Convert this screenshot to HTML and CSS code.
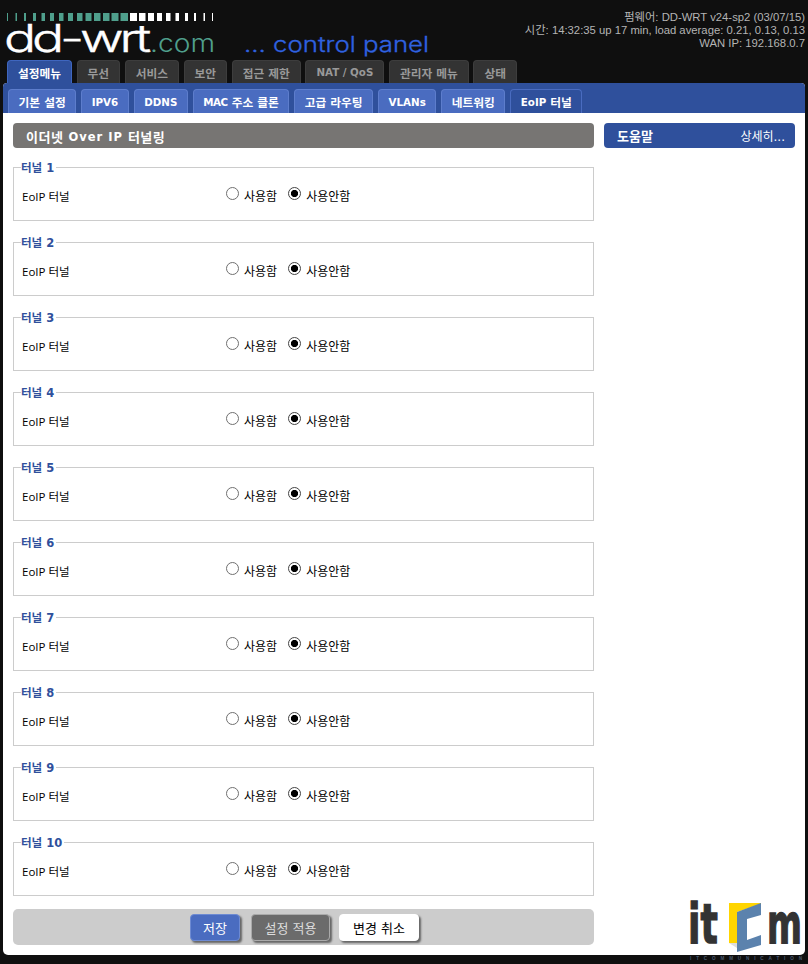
FILE: index.html
```html
<!DOCTYPE html>
<html lang="ko">
<head>
<meta charset="utf-8">
<title>DD-WRT EoIP</title>
<link rel="stylesheet" href="styles.css">
</head>
<body>
<div class="page">
  <header class="header">
    <svg class="logo" width="440" height="60" viewBox="0 0 440 60">
      <g class="tick-green">
        <rect x="7" y="13" width="1" height="8"/><rect x="15.5" y="13" width="1.5" height="8"/><rect x="24" y="13" width="2" height="8"/><rect x="33" y="13" width="3" height="8"/><rect x="41.5" y="13" width="3.5" height="8"/><rect x="50" y="13" width="4" height="8"/><rect x="59" y="13" width="4.5" height="8"/><rect x="68" y="13" width="5" height="8"/><rect x="77" y="13" width="5.5" height="8"/><rect x="85.5" y="13" width="6" height="8"/><rect x="94" y="13" width="6.5" height="8"/><rect x="103" y="13" width="6.5" height="8"/><rect x="111.5" y="13" width="7" height="8"/><rect x="120.5" y="13" width="7.5" height="8"/>
      </g>
      <g class="tick-white">
        <rect x="130" y="13" width="7" height="8"/><rect x="139" y="13" width="6.5" height="8"/><rect x="148" y="13" width="6" height="8"/><rect x="157" y="13" width="5" height="8"/><rect x="166" y="13" width="4.5" height="8"/><rect x="175.5" y="13" width="3.5" height="8"/><rect x="185" y="13" width="3" height="8"/><rect x="194" y="13" width="2" height="8"/><rect x="203.5" y="13" width="1.5" height="8"/><rect x="212" y="13" width="1" height="8"/>
      </g>
      <text class="logo-dd" x="4" y="52" textLength="143" lengthAdjust="spacingAndGlyphs">dd-wrt</text>
      <text class="logo-com" x="150" y="52" textLength="65" lengthAdjust="spacingAndGlyphs">.com</text>
      <text class="logo-panel" x="244" y="52" textLength="185" lengthAdjust="spacingAndGlyphs">... control panel</text>
    </svg>
    <div class="info">
      <div>펌웨어: DD-WRT v24-sp2 (03/07/15)</div>
      <div>시간: 14:32:35 up 17 min, load average: 0.21, 0.13, 0.13</div>
      <div>WAN IP: 192.168.0.7</div>
    </div>
  </header>

  <nav class="tabs">
    <a class="tab tab-active">설정메뉴</a>
    <a class="tab">무선</a>
    <a class="tab">서비스</a>
    <a class="tab">보안</a>
    <a class="tab">접근 제한</a>
    <a class="tab"><span class="lat">NAT / QoS</span></a>
    <a class="tab">관리자 메뉴</a>
    <a class="tab">상태</a>
  </nav>

  <div class="panel">
    <nav class="subtabs">
      <a class="subtab">기본 설정</a>
      <a class="subtab"><span class="lat">IPV6</span></a>
      <a class="subtab"><span class="lat">DDNS</span></a>
      <a class="subtab"><span class="lat lat-tight">MAC</span>&nbsp;주소 클론</a>
      <a class="subtab">고급 라우팅</a>
      <a class="subtab"><span class="lat">VLANs</span></a>
      <a class="subtab">네트워킹</a>
      <a class="subtab subtab-active"><span class="lat">EoIP</span>&nbsp;터널</a>
    </nav>
    <div class="content">
      <main class="main">
        <h2 class="title">이더넷&nbsp;<span class="title-lat">Over IP</span>&nbsp;터널링</h2>

        <fieldset class="group"><legend>터널 1</legend><div class="row"><span class="row-label">EoIP 터널</span><label class="opt"><input type="radio" name="t1">사용함</label><label class="opt"><input type="radio" name="t1" checked>사용안함</label></div></fieldset>
        <fieldset class="group"><legend>터널 2</legend><div class="row"><span class="row-label">EoIP 터널</span><label class="opt"><input type="radio" name="t2">사용함</label><label class="opt"><input type="radio" name="t2" checked>사용안함</label></div></fieldset>
        <fieldset class="group"><legend>터널 3</legend><div class="row"><span class="row-label">EoIP 터널</span><label class="opt"><input type="radio" name="t3">사용함</label><label class="opt"><input type="radio" name="t3" checked>사용안함</label></div></fieldset>
        <fieldset class="group"><legend>터널 4</legend><div class="row"><span class="row-label">EoIP 터널</span><label class="opt"><input type="radio" name="t4">사용함</label><label class="opt"><input type="radio" name="t4" checked>사용안함</label></div></fieldset>
        <fieldset class="group"><legend>터널 5</legend><div class="row"><span class="row-label">EoIP 터널</span><label class="opt"><input type="radio" name="t5">사용함</label><label class="opt"><input type="radio" name="t5" checked>사용안함</label></div></fieldset>
        <fieldset class="group"><legend>터널 6</legend><div class="row"><span class="row-label">EoIP 터널</span><label class="opt"><input type="radio" name="t6">사용함</label><label class="opt"><input type="radio" name="t6" checked>사용안함</label></div></fieldset>
        <fieldset class="group"><legend>터널 7</legend><div class="row"><span class="row-label">EoIP 터널</span><label class="opt"><input type="radio" name="t7">사용함</label><label class="opt"><input type="radio" name="t7" checked>사용안함</label></div></fieldset>
        <fieldset class="group"><legend>터널 8</legend><div class="row"><span class="row-label">EoIP 터널</span><label class="opt"><input type="radio" name="t8">사용함</label><label class="opt"><input type="radio" name="t8" checked>사용안함</label></div></fieldset>
        <fieldset class="group"><legend>터널 9</legend><div class="row"><span class="row-label">EoIP 터널</span><label class="opt"><input type="radio" name="t9">사용함</label><label class="opt"><input type="radio" name="t9" checked>사용안함</label></div></fieldset>
        <fieldset class="group"><legend>터널 10</legend><div class="row"><span class="row-label">EoIP 터널</span><label class="opt"><input type="radio" name="t10">사용함</label><label class="opt"><input type="radio" name="t10" checked>사용안함</label></div></fieldset>

        <div class="actions">
          <button class="btn btn-save">저장</button>
          <button class="btn btn-apply">설정 적용</button>
          <button class="btn btn-cancel">변경 취소</button>
        </div>
      </main>
      <aside class="side">
        <div class="help">
          <span class="help-title">도움말</span>
          <a class="help-more">상세히...</a>
        </div>
      </aside>
    </div>
    <svg class="itcom" width="118" height="64" viewBox="0 0 118 64">
      <text class="itcom-letter" transform="translate(0 44.5) scale(.66 1)">it</text>
      <polygon class="itcom-shadow" points="41,45 49,45 49,50"/>
      <polygon class="itcom-yellow" points="41,5 73,5 73,6 49,14 49,45 41,45"/>
      <polygon class="itcom-blue" points="49,14 73,5 73,17 59,21 59,42 73,37 73,47 49,54"/>
      <text class="itcom-letter" transform="translate(79 44.5) scale(.61 1)">m</text>
      <text class="itcom-small" x="2" y="62" textLength="112" lengthAdjust="spacing">ITCOMMUNICATION</text>
    </svg>
  </div>
</div>
</body>
</html>
```

FILE: styles.css
```css
* { box-sizing: border-box; }
html, body { margin: 0; padding: 0; }
body {
  width: 808px;
  height: 964px;
  overflow: hidden;
  background: #0f0f0f;
  font-family: "DejaVu Sans", "Noto Sans CJK KR", sans-serif;
  font-size: 11.7px;
  color: #000;
}
.page { padding: 0 3px; }

.header {
  height: 60px;
  display: flex;
  justify-content: space-between;
  margin-left: -3px;
}
.logo { display: block; flex: none; }
.tick-green rect { fill: #4f9f8c; }
.tick-white rect { fill: #fff; }
.logo-dd { font: 300 38px "Inter", sans-serif; letter-spacing: -3px; fill: #fff; stroke: #fff; stroke-width: .4px; }
.logo-com { font: 300 24px "Inter", sans-serif; fill: #4f9f8c; }
.logo-panel { font: 300 21px "Inter", sans-serif; fill: #2f62e0; stroke: #2f62e0; stroke-width: .3px; }
.info {
  padding-top: 11px;
  text-align: right;
  font-family: "Liberation Sans", "Noto Sans CJK KR", sans-serif;
  font-size: 11.3px;
  line-height: 13px;
  color: #b4b4b4;
  white-space: nowrap;
}

.lat { font-size: 10.3px; }
.lat-tight { letter-spacing: -.5px; }

.tabs {
  height: 23px;
  display: flex;
  gap: 4.6px;
  padding-left: 4px;
}
.tab {
  height: 23px;
  padding: 0 10px;
  display: flex;
  align-items: center;
  background: #333;
  border: 1px solid #3d3d3d;
  border-bottom: 0;
  border-radius: 4px 4px 0 0;
  color: #999;
  font-weight: 700;
  white-space: nowrap;
}
.tab-active {
  background: #2f509c;
  border-color: #3f66bf;
  color: #fff;
}

.panel {
  position: relative;
  height: 872px;
  background: #fff;
  border-radius: 4px 4px 5px 5px;
}
.subtabs {
  height: 30px;
  display: flex;
  gap: 4.8px;
  align-items: flex-end;
  padding-left: 5px;
  background: #2f509c;
  border-radius: 4px 4px 0 0;
}
.subtab {
  height: 24px;
  padding: 0 9.6px;
  display: flex;
  align-items: center;
  background: #4a6cc0;
  border: 1px solid #5d7dcc;
  border-bottom: 0;
  border-radius: 4px 4px 0 0;
  color: #fff;
  font-weight: 700;
  white-space: nowrap;
}
.subtab-active {
  background: #2f509c;
  border-color: #4a6cc0;
}

.content {
  display: flex;
  gap: 10px;
  padding: 10px 10px 0;
}
.main { width: 581px; flex: none; }
.side { width: 191px; flex: none; }

.title {
  height: 25px;
  margin: 0 0 12px;
  padding: 2px 0 0 13px;
  display: flex;
  align-items: center;
  background: #777573;
  border-radius: 4px;
  color: #fff;
  font-size: 13px;
  font-weight: 700;
  letter-spacing: .5px;
  white-space: nowrap;
}
.title-lat { font-size: 11.5px; letter-spacing: 1px; }
.group {
  height: 61px;
  margin: 0 0 14px;
  padding: 0 8px;
  border: 1px solid #ccc;
  min-width: 0;
}
.group legend {
  padding: 1px 2px 0 0;
  margin-left: -1px;
  height: 14px;
  line-height: 14px;
  font-weight: 700;
  font-size: 11.5px;
  color: #2f509c;
}
.row {
  display: flex;
  align-items: center;
  height: 24px;
  margin-top: 10px;
  font-family: "Open Sans", "Noto Sans CJK KR", sans-serif;
  font-size: 12px;
}
.row-label { width: 204px; flex: none; font-size: 11.5px; }
.opt {
  display: flex;
  align-items: center;
  margin-right: 11px;
}
.opt input {
  appearance: none;
  width: 13px;
  height: 13px;
  margin: -5px 5px 0 0;
  border: 1px solid #707070;
  border-radius: 50%;
  background: #fff;
}
.opt input:checked {
  border-color: #444;
  background: radial-gradient(circle, #000 0 3.2px, #fff 4px);
}

.actions {
  height: 36px;
  margin-top: -1px;
  display: flex;
  gap: 9px;
  justify-content: flex-start;
  align-items: flex-start;
  padding: 5px 0 0 177px;
  background: #ccc;
  border-radius: 5px;
}
.btn {
  height: 27px;
  padding: 0;
  border-radius: 4px;
  border: 1px solid #fff;
  font-family: inherit;
  font-size: 13px;
  box-shadow: 2px 2px 2px #666;
}
.btn-save { width: 50px; margin-right: 2px; background: #4a6cc0; color: #fff; border-color: #6d8ad2; }
.btn-apply { width: 79px; background: #6b6b6b; color: #ddd; border-color: #aaa; }
.btn-cancel { width: 80px; background: #fff; color: #000; }

.help {
  height: 25px;
  padding: 0 10px 0 13px;
  display: flex;
  align-items: center;
  justify-content: space-between;
  background: #2f509c;
  border-radius: 4px;
  color: #fff;
}
.help-title { font-size: 13px; font-weight: 700; }
.help-more { font-size: 12px; }

.itcom {
  position: absolute;
  left: 685px;
  top: 815px;
  overflow: visible;
}
.itcom-letter { font: 700 55px "DejaVu Sans", sans-serif; fill: #333; stroke: #333; stroke-width: 1.4px; }
.itcom-yellow { fill: #ffd500; }
.itcom-blue { fill: #5b82ad; }
.itcom-shadow { fill: #ddd; }
.itcom-small { font: 700 4.6px "Liberation Sans", sans-serif; fill: #4a5a70; }
```
